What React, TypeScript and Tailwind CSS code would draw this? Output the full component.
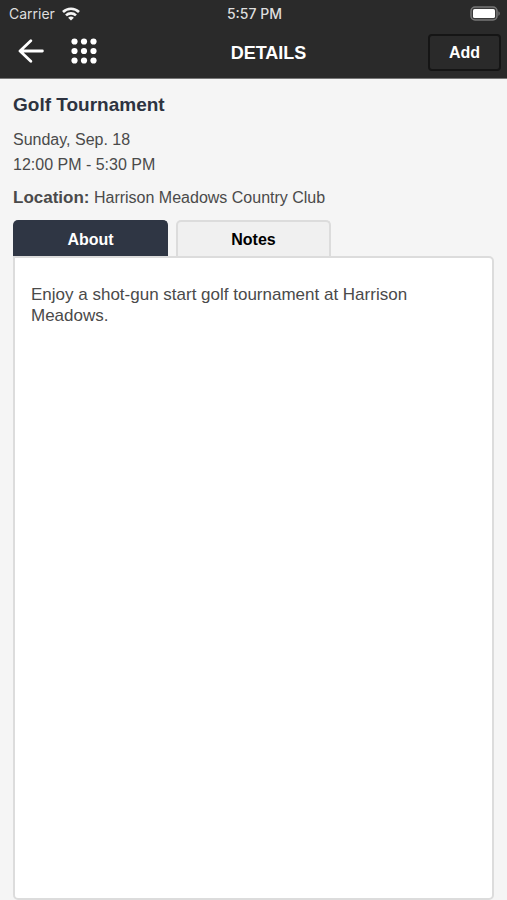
import { useState } from "react";
import { clsx } from "clsx";

type TabId = "about" | "notes";

const tabs: { id: TabId; label: string }[] = [
  { id: "about", label: "About" },
  { id: "notes", label: "Notes" },
];

const event = {
  title: "Golf Tournament",
  date: "Sunday, Sep. 18",
  time: "12:00 PM - 5:30 PM",
  location: "Harrison Meadows Country Club",
  about: "Enjoy a shot-gun start golf tournament at Harrison Meadows.",
};

function WifiIcon() {
  return (
    <svg width="18" height="14" viewBox="0 0 18 14" fill="none" stroke="#f4f4f4" strokeWidth="2.6" aria-hidden="true">
      <path d="M1 5a11.4 11.4 0 0 1 16 0" />
      <path d="M4 8.4a7.2 7.2 0 0 1 10 0" />
      <path d="M9 13.6 6.1 10.8a4.2 4.2 0 0 1 5.8 0Z" fill="#f4f4f4" stroke="none" />
    </svg>
  );
}

function BatteryIcon() {
  return (
    <svg width="30" height="15" viewBox="0 0 30 15" aria-hidden="true">
      <rect x="1" y="1" width="26" height="13" rx="4" fill="#3a3a3a" stroke="#777" strokeWidth="1.5" />
      <rect x="3" y="3" width="22" height="9" rx="1.6" fill="#fff" />
      <path d="M28.4 5.2c1.8.8 1.8 3.8 0 4.6Z" fill="#777" />
    </svg>
  );
}

function BackIcon() {
  return (
    <svg width="26" height="24" viewBox="0 0 26 24" fill="none" stroke="#fff" strokeWidth="2.8" strokeLinecap="round" strokeLinejoin="round" aria-hidden="true">
      <path d="M12.8 1.8 2 12l10.8 10.2M2.4 12h22" />
    </svg>
  );
}

function GridIcon() {
  const stops = [3.5, 13, 22.5];
  return (
    <svg width="26" height="26" viewBox="0 0 26 26" fill="#fff" aria-hidden="true">
      {stops.map((y) => stops.map((x) => <circle key={`${x}-${y}`} cx={x} cy={y} r="3.1" />))}
    </svg>
  );
}

function StatusBar() {
  return (
    <div className="grid h-[27px] grid-cols-3 items-center pr-[7px] pl-[9px] font-[Inter,sans-serif] text-sm text-[#dedede]">
      <div className="flex items-center gap-[7px]">
        Carrier
        <WifiIcon />
      </div>
      <div className="text-center font-medium">5:57 PM</div>
      <div className="flex justify-end">
        <BatteryIcon />
      </div>
    </div>
  );
}

function NavBar() {
  return (
    <nav className="grid h-[51px] grid-cols-[1fr_auto_1fr] items-center pr-[6px] pl-[18px]">
      <div className="flex items-center gap-[27px] pb-[3px]">
        <button type="button" aria-label="Back">
          <BackIcon />
        </button>
        <button type="button" aria-label="Menu">
          <GridIcon />
        </button>
      </div>
      <h1 className="pl-[18px] text-lg font-bold text-white">DETAILS</h1>
      <button
        type="button"
        className="h-[37px] w-[73px] justify-self-end rounded border-2 border-[#151515] text-base font-bold text-white"
      >
        Add
      </button>
    </nav>
  );
}

export default function App() {
  const [active, setActive] = useState<TabId>("about");

  return (
    <div className="flex min-h-screen flex-col bg-[#f5f5f5] font-['Liberation_Sans',Arial,sans-serif] text-[#4a4a4a]">
      <header className="border-b border-[#777] bg-[#2a2a2a]">
        <StatusBar />
        <NavBar />
      </header>

      <main className="flex grow flex-col px-[13px] pt-[14px]">
        <h2 className="text-[19px] leading-6 font-bold text-[#2d3340]">{event.title}</h2>
        <p className="mt-[10px] text-base leading-[25px]">
          {event.date}
          <br />
          {event.time}
        </p>
        <p className="mt-2 text-base leading-[25px]">
          <b className="text-[17px]">Location:</b> {event.location}
        </p>

        <div role="tablist" className="mt-[10px] flex gap-2">
          {tabs.map((tab) => (
            <button
              key={tab.id}
              id={`tab-${tab.id}`}
              type="button"
              role="tab"
              aria-selected={active === tab.id}
              aria-controls="panel"
              onClick={() => setActive(tab.id)}
              className={clsx(
                "h-9 w-[155px] rounded-t-[5px] border-2 border-b-0 pt-[2px] text-base font-bold",
                active === tab.id ? "border-[#2f3644] bg-[#2f3644] text-white" : "border-[#dcdcdc] bg-[#f0f0f0] text-black",
              )}
            >
              {tab.label}
            </button>
          ))}
        </div>

        <section
          id="panel"
          role="tabpanel"
          aria-labelledby={`tab-${active}`}
          className="grow rounded-[5px] rounded-tl-none border-2 border-[#dcdcdc] bg-white px-4 pt-[26px] text-[17px] leading-[21px]"
        >
          {active === "about" && event.about}
        </section>
      </main>
    </div>
  );
}
